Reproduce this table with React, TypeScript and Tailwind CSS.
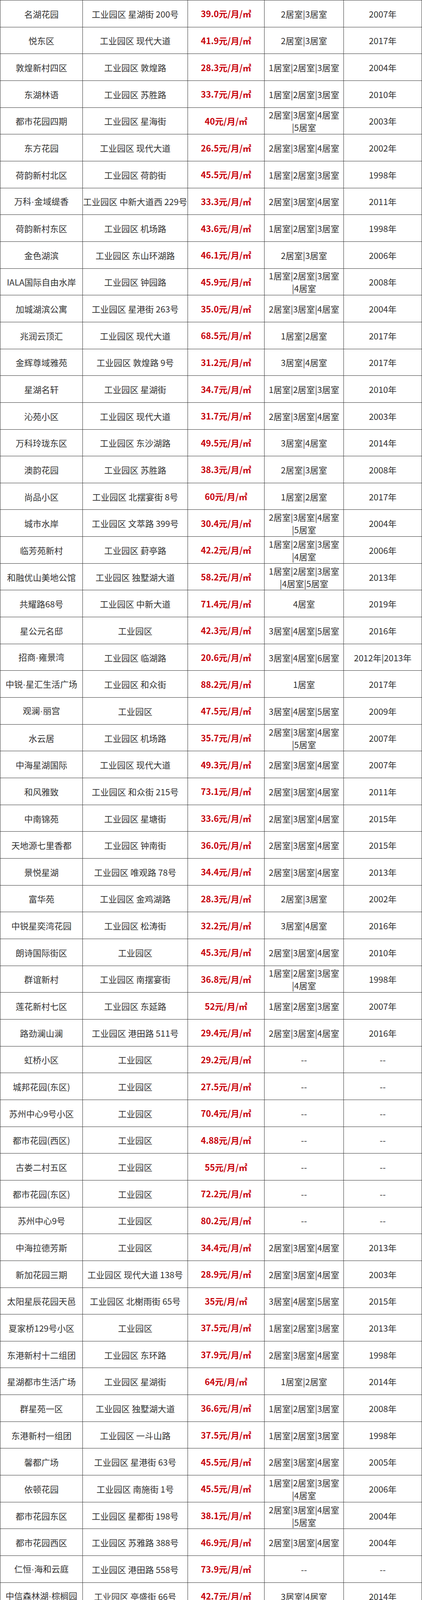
import React from "react";

type Row = [string, string, string, string, string];

const rows: Row[] = [
  ["名湖花园", "工业园区 星湖街 200号", "39.0", "2居室|3居室", "2007年"],
  ["悦东区", "工业园区 现代大道", "41.9", "2居室|3居室", "2017年"],
  ["敦煌新村四区", "工业园区 敦煌路", "28.3", "1居室|2居室|3居室", "2004年"],
  ["东湖林语", "工业园区 苏胜路", "33.7", "1居室|2居室|3居室", "2010年"],
  ["都市花园四期", "工业园区 星海街", "40", "2居室|3居室|4居室\n|5居室", "2003年"],
  ["东方花园", "工业园区 现代大道", "26.5", "2居室|3居室|4居室", "2002年"],
  ["荷韵新村北区", "工业园区 荷韵街", "45.5", "1居室|2居室|3居室", "1998年"],
  ["万科·金域缇香", "工业园区 中新大道西 229号", "33.3", "2居室|3居室|4居室", "2011年"],
  ["荷韵新村东区", "工业园区 机场路", "43.6", "1居室|2居室|3居室", "1998年"],
  ["金色湖滨", "工业园区 东山环湖路", "46.1", "2居室|3居室", "2006年"],
  ["IALA国际自由水岸", "工业园区 钟园路", "45.9", "1居室|2居室|3居室\n|4居室", "2008年"],
  ["加城湖滨公寓", "工业园区 星港街 263号", "35.0", "2居室|3居室|4居室", "2004年"],
  ["兆润云顶汇", "工业园区 现代大道", "68.5", "1居室|2居室", "2017年"],
  ["金辉尊域雅苑", "工业园区 敦煌路 9号", "31.2", "3居室|4居室", "2017年"],
  ["星湖名轩", "工业园区 星湖街", "34.7", "1居室|2居室|3居室", "2010年"],
  ["沁苑小区", "工业园区 现代大道", "31.7", "2居室|3居室|4居室", "2003年"],
  ["万科玲珑东区", "工业园区 东沙湖路", "49.5", "3居室|4居室", "2014年"],
  ["澳韵花园", "工业园区 苏胜路", "38.3", "2居室|3居室", "2008年"],
  ["尚品小区", "工业园区 北摆宴街 8号", "60", "1居室|2居室", "2017年"],
  ["城市水岸", "工业园区 文萃路 399号", "30.4", "2居室|3居室|4居室\n|5居室", "2004年"],
  ["临芳苑新村", "工业园区 葑亭路", "42.2", "1居室|2居室|3居室\n|4居室", "2006年"],
  ["和融优山美地公馆", "工业园区 独墅湖大道", "58.2", "1居室|2居室|3居室\n|4居室|5居室", "2013年"],
  ["共耀路68号", "工业园区 中新大道", "71.4", "4居室", "2019年"],
  ["星公元名邸", "工业园区", "42.3", "3居室|4居室|5居室", "2016年"],
  ["招商·雍景湾", "工业园区 临湖路", "20.6", "3居室|4居室|6居室", "2012年|2013年"],
  ["中锐·星汇生活广场", "工业园区 和众街", "88.2", "1居室", "2017年"],
  ["观澜·丽宫", "工业园区", "47.5", "3居室|4居室|5居室", "2009年"],
  ["水云居", "工业园区 机场路", "35.7", "2居室|3居室|4居室\n|5居室", "2007年"],
  ["中海星湖国际", "工业园区 现代大道", "49.3", "2居室|3居室|4居室", "2007年"],
  ["和风雅致", "工业园区 和众街 215号", "73.1", "2居室|3居室|4居室", "2011年"],
  ["中南锦苑", "工业园区 星塘街", "33.6", "2居室|3居室|4居室", "2015年"],
  ["天地源七里香都", "工业园区 钟南街", "36.0", "2居室|3居室|4居室", "2015年"],
  ["景悦星湖", "工业园区 唯观路 78号", "34.4", "2居室|3居室|4居室", "2013年"],
  ["富华苑", "工业园区 金鸡湖路", "28.3", "2居室|3居室", "2002年"],
  ["中锐星奕湾花园", "工业园区 松涛街", "32.2", "3居室|4居室", "2016年"],
  ["朗诗国际街区", "工业园区", "45.3", "2居室|3居室|4居室", "2010年"],
  ["群谊新村", "工业园区 南摆宴街", "36.8", "1居室|2居室|3居室\n|4居室", "1998年"],
  ["莲花新村七区", "工业园区 东延路", "52", "1居室|2居室|3居室", "2007年"],
  ["路劲澜山澜", "工业园区 港田路 511号", "29.4", "2居室|3居室|4居室", "2016年"],
  ["虹桥小区", "工业园区", "29.2", "--", "--"],
  ["城邦花园(东区)", "工业园区", "27.5", "--", "--"],
  ["苏州中心9号小区", "工业园区", "70.4", "--", "--"],
  ["都市花园(西区)", "工业园区", "4.88", "--", "--"],
  ["古娄二村五区", "工业园区", "55", "--", "--"],
  ["都市花园(东区)", "工业园区", "72.2", "--", "--"],
  ["苏州中心9号", "工业园区", "80.2", "--", "--"],
  ["中海拉德芳斯", "工业园区", "34.4", "2居室|3居室|4居室", "2013年"],
  ["新加花园三期", "工业园区 现代大道 138号", "28.9", "2居室|3居室|4居室", "2003年"],
  ["太阳星辰花园天邑", "工业园区 北榭雨街 65号", "35", "3居室|4居室|5居室", "2015年"],
  ["夏家桥129号小区", "工业园区", "37.5", "1居室|2居室|3居室", "2013年"],
  ["东港新村十二组团", "工业园区 东环路", "37.9", "2居室|3居室|4居室", "1998年"],
  ["星湖都市生活广场", "工业园区 星湖街", "64", "1居室|2居室", "2014年"],
  ["群星苑一区", "工业园区 独墅湖大道", "36.6", "1居室|2居室|3居室", "2008年"],
  ["东港新村一组团", "工业园区 一斗山路", "37.5", "1居室|2居室|3居室", "1998年"],
  ["馨都广场", "工业园区 星港街 63号", "45.5", "2居室|3居室|4居室", "2005年"],
  ["依顿花园", "工业园区 南施街 1号", "45.5", "1居室|2居室|3居室\n|4居室", "2006年"],
  ["都市花园东区", "工业园区 星都街 198号", "38.1", "2居室|3居室|4居室\n|5居室", "2004年"],
  ["都市花园西区", "工业园区 苏雅路 388号", "46.9", "2居室|3居室|4居室", "2004年"],
  ["仁恒·海和云庭", "工业园区 港田路 558号", "73.9", "--", "--"],
  ["中信森林湖·棕榈园", "工业园区 亭盛街 66号", "42.7", "3居室|4居室", "2014年"],
  ["九龙仓苏州国际金融\n中心", "工业园区 翠园路", "108", "--", "--"],
  ["乐嘉大厦", "工业园区 现代大道", "50.2", "1居室|2居室", "2010年"],
  ["东方文荟苑", "工业园区 星塘街", "36.4", "1居室|2居室|3居室", "2014年"],
  ["泊云庭", "工业园区 金鸡湖大道", "31.3", "3居室|4居室", "--"],
  ["建屋紫金东方", "工业园区 启月街 288号", "58.3", "1居室|2居室|3居室\n|4居室", "2010年"],
  ["中国铁建·花语江南", "工业园区 万寿街 88号", "58.3", "1居室|2居室|3居室", "--"],
  ["中新翠湖", "工业园区 青澄路 85号", "38.5", "2居室|3居室|4居室", "2012年"],
  ["华园星城金锦苑", "工业园区 葑亭路 599号", "37.2", "2居室|3居室|4居室", "2012年"],
  ["雅戈尔·伯爵", "工业园区 玲珑街", "59.6", "2居室|3居室|4居室", "2008年"],
  ["中海国际社区六区", "工业园区 钟园路", "34.1", "2居室|3居室", "2010年"],
  ["联鑫·安漫云苑", "工业园区", "53.1", "--", "--"],
  ["万科中粮·本岸", "工业园区 南施街", "63.0", "2居室|4居室|5居室", "2009年"],
  ["路劲·辉映时代", "工业园区 兴浦路", "41.7", "3居室", "--"],
  ["北极星花园", "工业园区 星塘街", "45.7", "2居室|3居室", "2014年"],
  ["澄畔新村", "工业园区", "36.4", "2居室", "--"],
  ["维纳阳光花园北区", "工业园区 科能路 80号", "31.8", "2居室|3居室", "2012年"],
  ["雅戈尔天宸", "工业园区 东沙湖路", "67.4", "5居室|6居室|7居室", "2015年"],
  ["东湖大郡二期", "工业园区 苏胜路", "43.8", "2居室|3居室|4居室", "2006年"],
  ["东港新村十组团", "工业园区 东环路", "40", "1居室|2居室|3居室", "1998年"],
  ["紫荆苑", "工业园区 沈浒路", "35.0", "2居室|3居室", "2011年"],
  ["东港新村三组团", "工业园区 现代大道", "40", "2居室", "1998年"],
  ["凤凰城", "工业园区 榭雨街 9号", "49.2", "1居室|2居室|3居室\n|4居室", "2008年"],
  ["诚品居所", "工业园区 月廊街 8号", "83.3", "2居室|3居室|4居室", "2015年"],
  ["东港新村六组团", "工业园区 现代大道", "37.7", "2居室|3居室|4居室", "1998年"],
  ["景悦星湖南区", "工业园区 唯观路 78号", "35.3", "--", "2013年"],
  ["胜浦闻涛苑", "工业园区 胜浦路", "28.7", "1居室|2居室|3居室", "2009年"],
  ["亭苑社区A区", "工业园区", "35.5", "1居室|2居室|3居室", "2008年"],
  ["优公馆", "工业园区 阳澄湖大道", "42.0", "2居室|3居室", "2016年"],
  ["阿卡迪亚二区", "工业园区 青澄路 97号", "42.3", "2居室|3居室|4居室", "2013年"],
  ["金怡苑", "工业园区 迎宾路 6号", "29.6", "2居室|3居室", "2010年"],
  ["中海8号公馆", "工业园区 钟园路", "39.8", "2居室|3居室|4居室", "2014年"],
  ["中海国际社区爱丁堡", "工业园区 方洲路", "44.0", "2居室|3居室", "2013年"],
  ["摩尔尚城", "工业园区 金陵东路", "34.6", "2居室|3居室", "2009年"],
];

function Segment({ text }: { text: string }) {
  const parts = text.split("·");
  return (
    <span className="whitespace-pre">
      {parts.map((p, i) => (
        <React.Fragment key={i}>
          {i > 0 && <span className="font-['Liberation_Sans']">·</span>}
          {p}
        </React.Fragment>
      ))}
    </span>
  );
}

function Lines({ text }: { text: string }) {
  const parts = text.split("\n");
  return (
    <div className="flex flex-col items-center leading-[32px]">
      {parts.map((p, i) => (
        <Segment key={i} text={p} />
      ))}
    </div>
  );
}

const cell =
  "flex items-center justify-center border-r border-b border-[#333333] overflow-hidden text-center";

export default function App() {
  return (
    <div
      className="w-[1080px] bg-white border-l border-t border-[#333333] grid grid-cols-[211px_269px_196px_203px_200px] auto-rows-[68.666px] text-[22px] text-[#333333]"
      style={{ fontFamily: '"Noto Sans CJK SC", "Noto Sans", sans-serif' }}
    >
      {rows.map((r, i) => (
        <React.Fragment key={i}>
          <div className={cell}>
            <Lines text={r[0]} />
          </div>
          <div className={cell}>
            <Lines text={r[1]} />
          </div>
          <div className={cell}>
            <span className="whitespace-pre font-bold text-[#c8000a]">
              {r[2]}元/月/㎡
            </span>
          </div>
          <div className={cell}>
            <Lines text={r[3]} />
          </div>
          <div className={cell}>
            <Lines text={r[4]} />
          </div>
        </React.Fragment>
      ))}
    </div>
  );
}
